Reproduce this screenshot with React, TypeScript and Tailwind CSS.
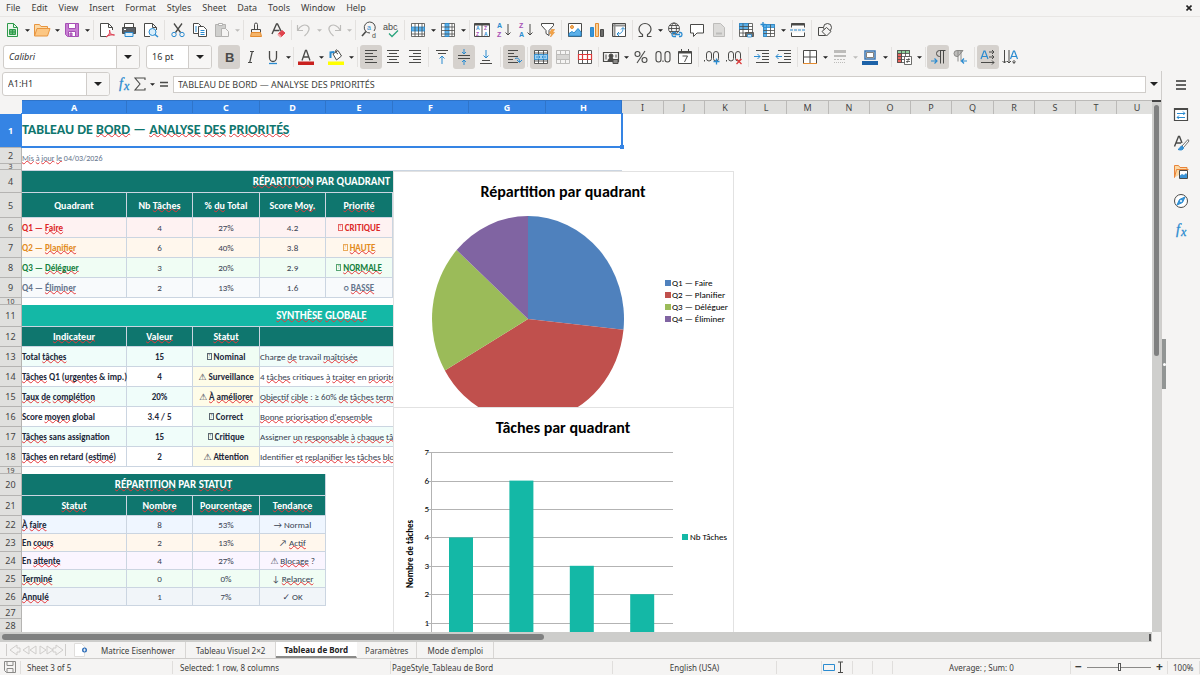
import React from 'react'

const K = '#4a4a48'
const B = '#2a8bd0'

const icons: Record<string, React.ReactNode> = {
    new: (
        <g fill="none" stroke="#2f9a4b">
            <path d="M3.5 1.5h6l4 4v9h-10z" fill="#eaf7ec" />
            <path d="M9.5 1.5v4h4" />
            <path d="M5.5 7.5h6v5h-6zM5.5 10h6M8.5 7.5v5" fill="#6cc07f" />
        </g>
    ),
    open: (
        <g stroke="#e8953f" strokeLinejoin="round">
            <path d="M.5 14V2.500h5l1.500 2h6.500v3" fill="#fbd9a6" />
            <path d="M.5 14L3 6.500h13L13.500 14z" fill="#fcc784" />
        </g>
    ),
    save: (
        <g stroke="#a64fb5" fill="#c87fd3">
            <path d="M1.500 1.500h13v13h-11l-2-2z" />
            <path d="M4.500 1.500h7v5h-7z" fill="#fff" />
            <path d="M4.500 9.500h7v5h-7z" fill="#fff" />
            <path d="M6 11h2v3H6z" />
        </g>
    ),
    pdf: (
        <g fill="none" stroke={K}>
            <path d="M13.500 8V5.500l-4-4h-8v13H8" fill="#fff" />
            <path d="M9.500 1.500v4h4" />
            <path d="M7 15c3-2 4.500-5 3.500-7 0 4 3 5 5 5-3-.5-6 0-8.500 2z" stroke="#dc3a4e" fill="#f0a0aa" />
        </g>
    ),
    print: (
        <g stroke={K}>
            <path d="M3.500 1.500h9v4h-9z" fill="#fff" />
            <path d="M1.500 5.500h13v6h-13z" fill="#5b6066" />
            <path d="M4 10.500h8v4H4z" fill="#dff0fb" stroke={B} />
            <path d="M3 7.500h2" stroke="#fff" />
        </g>
    ),
    preview: (
        <g fill="none" stroke={K}>
            <path d="M7 14.500H1.500v-13h8l4 4V8M9.500 1.500v4h4" fill="#fff" />
            <circle cx="9.500" cy="10" r="3.500" stroke={B} fill="#d9eefb" />
            <path d="M12 12.500l3 2.500" stroke={B} strokeWidth="1.500" />
        </g>
    ),
    cut: (
        <g fill="none" stroke={K}>
            <path d="M4 1.500l6.500 9M12 1.500l-6.500 9" strokeWidth="1.300" />
            <circle cx="4" cy="12.500" r="2.200" stroke={B} />
            <circle cx="12" cy="12.500" r="2.200" stroke={B} />
        </g>
    ),
    copy: (
        <g fill="#fff" stroke={K}>
            <path d="M1.500 1.500h5l3 3v7h-8z" />
            <path d="M6.500 4.500h5l3 3v7h-8z" />
            <path d="M8.500 8.500h4M8.500 10.500h4M8.500 12.500h4M3 5h2M3 7h2M3 9h2" stroke={B} />
        </g>
    ),
    paste: (
        <g fill="#cfcfcd" stroke="#b3b2b0">
            <path d="M1.500 2.500h10v12h-10z" />
            <path d="M4.500 1.500h4v2h-4z" fill="#fff" />
            <path d="M7.500 6.500h4l3 3v5h-7z" fill="#f5f4f3" />
        </g>
    ),
    clone: (
        <g fill="none" stroke={K}>
            <path d="M6.500 7.500v-5a1.500 1.500 0 013 0v5" />
            <path d="M3.500 7.500h9v3h-9z" />
            <path d="M3.500 10.500l-1 4h11l-1-4z" fill="#f5b469" stroke="#e48b2f" />
        </g>
    ),
    clear: (
        <g fill="none" stroke={K}>
            <path d="M2 12L6.500 2h1L11 9M3.500 8.500h6" strokeWidth="1.400" />
            <path d="M8 12l4-3.500 3 2.500-4 4z" fill="#e0444e" stroke="#e0444e" />
            <path d="M8 12l3 3" stroke="#f3a3a8" strokeWidth="2" />
        </g>
    ),
    undo: <path d="M1.500 3v5.500H7M2 8c2-4 6-6 9-4.500 3.500 2 2.500 6-2.500 10.500" fill="none" stroke="#bdbcba" strokeWidth="1.200" />,
    redo: <path d="M14.500 3v5.500H9M14 8c-2-4-6-6-9-4.500C1.500 5.500 2.500 9.500 7.500 14" fill="none" stroke="#bdbcba" strokeWidth="1.200" />,
    find: (
        <g fill="none" stroke={K}>
            <path d="M13 9a5.500 5.500 0 10-4 2" />
            <path d="M5 9.500L1 14" strokeWidth="1.600" />
            <text x="6" y="8" fontSize="7" fill={B} stroke="none">a</text>
            <text x="11" y="16" fontSize="7" fill={K} stroke="none">d</text>
        </g>
    ),
    spell: (
        <g>
            <text x="0" y="8" fontSize="9" fill={K}>abc</text>
            <path d="M6 11.500l3 3 6-6" fill="none" stroke="#2ba47d" strokeWidth="1.300" />
        </g>
    ),
    row: (
        <g fill="none" stroke={K} strokeWidth=".8">
            <path d="M1.500 1.500h13v13h-13z" fill="#fff" />
            <path d="M1.500 5h13v4h-13z" fill="#5cb0e8" stroke={B} />
            <path d="M1.500 12h13M5 1.500v13M8.500 1.500v13M12 1.500v13" />
        </g>
    ),
    col: (
        <g fill="none" stroke={K} strokeWidth=".8">
            <path d="M1.500 1.500h13v13h-13z" fill="#fff" />
            <path d="M5 1.500h4v13H5z" fill="#5cb0e8" stroke={B} />
            <path d="M12 1.500v13M1.500 5h13M1.500 8.500h13M1.500 12h13" />
        </g>
    ),
    sort: (
        <g fontSize="5" fontWeight="bold">
            <path d="M.500 1.500h15v13H.500zM8 2v12" fill="#fff" stroke={K} />
            <path d="M.500 2.500h15" stroke={K} strokeWidth="2" />
            <text x="2" y="8" fill={B}>A</text>
            <text x="2" y="14" fill="#a64fb5">Z</text>
            <text x="10" y="8" fill="#a64fb5">Z</text>
            <text x="10" y="14" fill={B}>A</text>
        </g>
    ),
    az: (
        <g fontSize="7" fontWeight="bold">
            <text x="1" y="6" fill={B}>A</text>
            <text x="1" y="15" fill="#a64fb5">Z</text>
            <path d="M12 2v11M9.500 10.500L12 13l2.500-2.500" fill="none" stroke={K} />
        </g>
    ),
    za: (
        <g fontSize="7" fontWeight="bold">
            <text x="1" y="6" fill="#a64fb5">Z</text>
            <text x="1" y="15" fill={B}>A</text>
            <path d="M12 2v11M9.500 10.500L12 13l2.500-2.500" fill="none" stroke={K} />
        </g>
    ),
    filter: (
        <g fill="none" stroke={K}>
            <path d="M1.500 1.500h12v2l-4.500 5v5l-3-2V8.500l-4.500-5z" fill="#fff" />
            <path d="M11.500 7.500h3l-2 3h2l-4 4.500 1-3.500h-2z" fill="#f5a545" stroke="#e48b2f" strokeWidth=".6" />
        </g>
    ),
    image: (
        <g stroke={K}>
            <path d="M1.500 1.500h13v13h-13z" fill="#fff" />
            <circle cx="5" cy="5" r="1.500" fill="#f5b469" stroke="#e48b2f" />
            <path d="M2 14v-2.500l3-2 2 1.500 4-4.500 3 3.500v4z" fill="#5cb0e8" stroke={B} />
        </g>
    ),
    chart: (
        <g>
            <path d="M1.500 5.500h3v9h-3z" fill="#3a93d6" stroke={B} />
            <path d="M6.500 1.500h3v13h-3z" fill="#f9cf96" stroke="#e48b2f" />
            <path d="M11.500 7.500h3v7h-3z" fill="#6b6b69" stroke={K} />
        </g>
    ),
    pivot: (
        <g fill="none" stroke={K}>
            <path d="M1.500 1.500h13v13h-13z" fill="#fff" />
            <path d="M1.500 3.500h13M3.500 1.500v13" strokeWidth="2" strokeOpacity=".6" />
            <path d="M12 6c0 4-2 6-6 6M10 7.500L12 5.500l2 2M8 10l-2 2 2 2" stroke={B} />
        </g>
    ),
    omega: <path d="M1.500 14.500h4v-2C3 11 2 9 2 7a6 5.500 0 0112 0c0 2-1 4-3.500 5.500v2h4" fill="none" stroke={K} strokeWidth="1.200" />,
    link: (
        <g fill="none" stroke={K} strokeWidth=".9">
            <circle cx="7" cy="6.500" r="5.500" />
            <ellipse cx="7" cy="6.500" rx="2.500" ry="5.500" />
            <path d="M1.500 6.500h11M2.500 3.500h9M2.500 9.500h9" />
            <path d="M9 10.500H6.500a1.500 2 0 000 4H9M12 10.500h1.500a1.500 2 0 010 4H12M8 12.500h5" stroke={B} strokeWidth="1.300" />
        </g>
    ),
    comment: <path d="M1.500 2.500h13v8.500H8l-3.500 3.500V11h-3z" fill="#fff" stroke={K} />,
    page: (
        <g fill="#dcdbd9" stroke="#bdbcba">
            <path d="M2.500 1.500h7l4 4v9h-11z" />
            <path d="M5 11.500h6" strokeWidth="2" />
        </g>
    ),
    printarea: (
        <g stroke={K} fill="none" strokeWidth=".8">
            <path d="M1.500 1.500h13v13h-13z" fill="#fff" />
            <path d="M1.500 1.500h9v6h-9z" fill="#5cb0e8" stroke={B} />
            <path d="M1.500 4.500h13M1.500 7.500h13M1.500 11h13M5 1.500v13M10.500 1.500v13" />
            <path d="M7.500 10.500h8v4h-8z" fill="#6b6b69" />
            <path d="M9.500 12.500h4v2.500h-4z" fill="#dff0fb" stroke={B} />
        </g>
    ),
    freeze: (
        <g stroke={K} fill="none" strokeWidth=".8">
            <path d="M3.500 2.500h11v12h-11z" fill="#fff" />
            <path d="M3.500 2.500h11v3h-11zM3.500 2.500h3v12h-3z" fill="#5cb0e8" stroke={B} />
            <path d="M3.500 8.500h11M3.500 11.500h11M10.500 2.500v12" />
            <path d="M.500 2.500h5M3 0v5" stroke={B} strokeWidth="1.300" />
        </g>
    ),
    split: (
        <g fill="none" stroke={K}>
            <path d="M1.500 5.500v-4h13v4M1.500 10.500v4h13v-4" fill="#fff" />
            <path d="M1.500 2.500h13" strokeWidth="2" />
            <path d="M0 8h16" stroke={B} strokeDasharray="3 1" />
        </g>
    ),
    shapes: (
        <g fill="#f5f4f3" stroke={K}>
            <path d="M1.500 5.500h7v8h-7z" />
            <circle cx="10.500" cy="5.500" r="4" />
            <path d="M9.500 5.500l4.500 4-4.500 4.500L5 9.500z" />
        </g>
    ),
    bold: <text x="4" y="13" fontSize="13" fontWeight="bold" fill={K}>B</text>,
    italic: <path d="M7 2.500h4M5 13.500h4M9.300 2.500L6.700 13.500" fill="none" stroke={K} strokeWidth="1.200" />,
    under: (
        <g fill="none">
            <path d="M4.500 2v6.500a3.500 4 0 007 0V2" stroke={K} strokeWidth="1.300" />
            <path d="M4 14.500h8" stroke={B} strokeWidth="1.300" />
        </g>
    ),
    color: (
        <g>
            <path d="M4 11.500L7.500 1.500h1L12 11.500M5.200 8h5.600" fill="none" stroke={K} strokeWidth="1.300" />
            <path d="M0 12.500h16v3.500H0z" fill="#c9211e" />
        </g>
    ),
    fill: (
        <g>
            <path d="M5 5l5-3.500 3.500 5.500-5 4z" fill="#fff" stroke={K} />
            <path d="M9 1c-2-1-2 3 1 4" fill="none" stroke={K} />
            <path d="M2.500 9V3.500L6.500 3" stroke={B} strokeWidth="2" fill="none" />
            <path d="M0 12.500h16v3.500H0z" fill="#ffff00" />
        </g>
    ),
    left: <path d="M2 1.500h12M2 4.500h8M2 7.500h12M2 10.500h8M2 13.500h12" stroke={K} />,
    center: <path d="M2 1.500h12M4 4.500h8M2 7.500h12M4 10.500h8M2 13.500h12" stroke={K} />,
    right: <path d="M2 1.500h12M6 4.500h8M2 7.500h12M6 10.500h8M2 13.500h12" stroke={K} />,
    top: (
        <g fill="none">
            <path d="M2 1.500h12M4 4.500h8" stroke={K} />
            <path d="M8 15V7M5.500 9.500L8 7l2.500 2.500" stroke={B} />
        </g>
    ),
    middle: (
        <g fill="none">
            <path d="M2 6.500h12M2 9.500h12" stroke={K} />
            <path d="M8 0v5M6 3l2 2 2-2M8 16v-5M6 13l2-2 2 2" stroke={B} />
        </g>
    ),
    bottom: (
        <g fill="none">
            <path d="M2 14.500h12M4 11.500h8" stroke={K} />
            <path d="M8 1v8M5.500 6.500L8 9l2.500-2.500" stroke={B} />
        </g>
    ),
    wrap: (
        <g fill="none">
            <path d="M2 1.500h10M2 4.500h6M2 7.500h10M2 10.500h5M2 13.500h10" stroke={K} />
            <path d="M9 9.500c3-1 4.500 0 4.500 3.500M11 11l2.500 2.500L16 11" stroke={B} />
        </g>
    ),
    merge: (
        <g fill="none" stroke={K} strokeWidth=".9">
            <path d="M1.500 1.500h13v13h-13z" fill="#fff" />
            <path d="M1.500 5.500h13v5h-13z" fill="#9ed1f3" stroke={B} />
            <path d="M1.500 4h13M1.500 12h13M5.500 1.500v4M10.500 1.500v4M5.500 10.500v4M10.500 10.500v4" />
            <path d="M3 8h4M9 8h4M5.500 6.500L7 8 5.500 9.500M10.500 6.500L9 8l1.500 1.500" stroke={B} />
        </g>
    ),
    mergeoff: (
        <g fill="none" stroke="#bdbcba">
            <path d="M1.500 1.500h13v13h-13zM1.500 5.500h13M1.500 10.500h13M5.500 1.500v4M10.500 1.500v4M5.500 10.500v4M10.500 10.500v4" />
            <path d="M2 8h12" strokeWidth="4" stroke="#d7d6d4" />
        </g>
    ),
    unmerge: (
        <g fill="none" stroke={K} strokeWidth=".9">
            <path d="M1.500 1.500h13v13h-13z" fill="#fff" />
            <path d="M1.500 5.500h13M1.500 10.500h13M5.500 1.500v13M10.500 1.500v13" />
            <path d="M1.500 5.500h13v5h-13zM5.500 5.500v5M10.500 5.500v5" stroke="#dc3a3a" strokeWidth="1.200" />
        </g>
    ),
    money: (
        <g fill="none" stroke={K}>
            <path d="M.500 3.500h15v9H.500z" strokeWidth="1.200" />
            <circle cx="8" cy="7" r="2" fill={K} />
            <path d="M3 5.500v5M13 5.500v3" />
            <path d="M5 12c0-4 6-4 6 0z" fill={K} />
            <path d="M10 14.500v-4h5v4z" fill="#8b8a88" />
        </g>
    ),
    percent: (
        <g fill="none" stroke={K} strokeWidth="1.100">
            <circle cx="4.500" cy="5" r="2.500" />
            <circle cx="11.500" cy="11" r="2.500" />
            <path d="M12 2L4 14" />
        </g>
    ),
    number: (
        <g fill="none" stroke={K} strokeWidth="1.100">
            <rect x="1" y="2.500" width="5" height="10.500" rx="2.500" />
            <rect x="10" y="2.500" width="5" height="10.500" rx="2.500" />
            <path d="M8 11.500v1.500" />
        </g>
    ),
    date: (
        <g fill="none" stroke={K}>
            <path d="M1.500 2.500h13v12h-13z" fill="#fff" />
            <path d="M1.500 3.500h13" strokeWidth="2" />
            <path d="M4.500 0v2M11.500 0v2M5.500 7h5l-3 6" />
        </g>
    ),
    adddec: (
        <g fill="none" stroke={K}>
            <rect x="2.500" y="2.500" width="5" height="9.500" rx="2.500" />
            <rect x="9.500" y="2.500" width="5" height="9.500" rx="2.500" />
            <path d="M.500 11v1.500" />
            <path d="M9.500 12.500h6M12.500 9.500v6" stroke={B} strokeWidth="1.300" />
        </g>
    ),
    deldec: (
        <g fill="none" stroke={K}>
            <rect x="2.500" y="2.500" width="5" height="9.500" rx="2.500" />
            <rect x="9.500" y="2.500" width="5" height="9.500" rx="2.500" />
            <path d="M.500 11v1.500" />
            <path d="M10.500 10l5 5M15.500 10l-5 5" stroke="#dc3a3a" strokeWidth="1.300" />
        </g>
    ),
    indent: (
        <g fill="none" stroke={K}>
            <path d="M2 1.500h13M8 4.500h7M8 7.500h7M8 10.500h7M2 13.500h13" />
            <path d="M0 7.500h6M3.500 5L6 7.500 3.500 10" stroke={B} />
        </g>
    ),
    outdent: (
        <g fill="none" stroke={K}>
            <path d="M2 1.500h13M8 4.500h7M8 7.500h7M8 10.500h7M2 13.500h13" />
            <path d="M0 7.500h6M2.500 5L0 7.500 2.500 10" stroke={B} />
        </g>
    ),
    border: (
        <g fill="none" stroke={K}>
            <path d="M1.500 14.500v-13h13v13M8 1.500v13M1.500 8h13" fill="#fff" />
            <path d="M1 14.500h14" stroke="#e48b2f" />
        </g>
    ),
    line: (
        <g stroke="#bdbcba">
            <path d="M2 2.500h12" strokeWidth="3" />
            <path d="M2 7h12" strokeWidth="2" />
            <path d="M2 10.500h12" strokeDasharray="2 1" />
            <path d="M2 13.500h12" strokeDasharray="1 1" />
        </g>
    ),
    bcolor: (
        <g>
            <path d="M3 2h10v8H3z" fill="#fff" stroke="#3a76b4" strokeWidth="1.500" />
            <path d="M4.500 3.500h7v5h-7z" fill="none" stroke={K} strokeWidth=".7" />
            <path d="M0 12h16v4H0z" fill="#1d62a8" />
        </g>
    ),
    cond: (
        <g fill="none" stroke={K} strokeWidth=".8">
            <path d="M1.500 1.500h12v12h-12z" fill="#fff" />
            <path d="M1.500 1.500h12v3h-12z" fill="#8fd19e" />
            <path d="M1.500 4.500h4v9h-4z" fill="#e9655f" />
            <path d="M1.500 7.500h12M1.500 10.500h12M5.500 1.500v12M9.500 1.500v12" />
            <path d="M8.500 7.500h7v8h-7zM10 10.500h4M10 12.500h4M13 9l-2 5" fill="#fff" />
        </g>
    ),
    ltr: (
        <g fill="none" stroke={K}>
            <path d="M15.500 1.500h-6a3 3 0 000 6h1M10.500 1.500v13M13.500 1.500v13" />
            <path d="M1 12h6M4.500 9.500L7 12l-2.500 2.500" stroke={B} strokeWidth="1.200" />
        </g>
    ),
    rtl: (
        <g fill="none" stroke="#8b8a88">
            <path d="M11 1.500H5a3 3 0 000 6h1z" fill="#bdbcba" />
            <path d="M11 1.500H5M6 1.500v11M9 1.500v11" />
            <path d="M15 12H9.500M12 9.500L9.500 12l2.500 2.500" stroke={B} strokeWidth="1.200" />
        </g>
    ),
    horiz: (
        <g fill="none" stroke={K}>
            <path d="M1 10L4 2h1l3 8M2 7.500h5" stroke={B} strokeWidth="1.200" />
            <path d="M9 3h5M12 1l2 2-2 2M9 8h5M12 6l2 2-2 2M1 13.500h13M12 11.500l2 2-2 2" />
        </g>
    ),
    vert: (
        <g fill="none" stroke={K}>
            <path d="M8.500 10l3-8h1l3 8M9.500 7.500h5" stroke={B} strokeWidth="1.200" />
            <path d="M2.500 1v13M.500 12l2 2 2-2M7 1v13M5 12l2 2 2-2M12 11v3M10.500 12.500l1.500 2 1.500-2" />
        </g>
    ),
    menu: <path d="M3 4h10M3 8h10M3 12h10" stroke="#333" strokeWidth="1.500" />,
    props: (
        <g fill="none" stroke={K}>
            <path d="M1.500 2.500h13v12h-13z" fill="#fff" strokeWidth="1.200" />
            <path d="M1.500 3h13" strokeWidth="2" />
            <path d="M4 7.500h8M4 11.500h8M10 5.500l2 2-2 1M6 9.500l-2 2 2 1" stroke={B} />
        </g>
    ),
    styles: (
        <g fill="none" stroke={K}>
            <path d="M1.500 11.500L5.500 1.500h1L9 8M3 8h5" strokeWidth="1.400" />
            <path d="M15 4.500L9 11l1.500 1.500L16 6z" fill="#fff" strokeWidth=".8" />
            <path d="M9 11c-2 0-2 3-4 3.500 3 1 5.500.5 5.500-2z" fill="#3a93d6" stroke={B} />
        </g>
    ),
    gallery: (
        <g>
            <path d="M1.500 13.500v-12h4l1.500 2h7v3" fill="#fbd9a6" stroke="#e8843a" />
            <path d="M1.500 13.500l2-8h12" fill="none" stroke="#e8843a" />
            <path d="M6.500 6.500h8v8h-8z" fill="#fff" stroke={K} />
            <path d="M7 14v-2.500l2-1.500 2 1 2-2 1 1.500V14z" fill="#3a93d6" />
        </g>
    ),
    nav: (
        <g>
            <circle cx="8" cy="8" r="6.500" fill="#fff" stroke={K} />
            <path d="M12 4L9.500 9.500 4 12l2.500-5.500z" fill="#3a93d6" stroke={B} />
            <circle cx="8" cy="8" r="1" fill="#fff" />
        </g>
    ),
    fx: (
        <g fontFamily="Liberation Serif" fontStyle="italic" fill={B} stroke={B} strokeWidth=".3">
            <text x="3" y="12" fontSize="14">f</text>
            <text x="8" y="14" fontSize="12">x</text>
        </g>
    ),
    sigma: <path d="M13 4V2H3l5 6-5 6h10v-2" fill="none" stroke={K} strokeWidth="1.100" />,
    equal: <path d="M4 6.500h8M4 10h8" stroke={K} strokeWidth="1.500" />,
}

const Icon = ({ name }: { name: string }) => (
    <svg viewBox="0 0 16 16" className="h-4 w-4 shrink-0 overflow-visible font-['Liberation_Sans',sans-serif]">{icons[name]}</svg>
)

const Caret = ({ off, big }: { off?: boolean; big?: boolean }) => (
    <svg viewBox="0 0 8 4" className={big ? 'h-1 w-2' : 'h-[3px] w-[5px]'}>
        <path d="M0 0h8L4 4z" fill={off ? '#bdbcba' : '#222'} />
    </svg>
)

// "name" plain, "name*" pressed, "name+" with drop-down, "name-" with a disabled one, a number is a separator
const Tools = ({ items }: { items: (string | number)[] }) => (
    <>
        {items.map((item, i) => {
            if (typeof item === 'number') {
                const w = item === 3 ? 'w-[3px]' : item === 4 ? 'w-[4px]' : item === 5 ? 'w-[5px]' : 'w-[6px]'
                return <span key={i} className={`${w} flex h-5 shrink-0 justify-center`}><span className="w-px bg-[#e3e1df]" /></span>
            }
            const name = item.replace(/[*+-]$/, '')
            const end = item.slice(-1)
            return (
                <React.Fragment key={i}>
                    <button aria-label={name} className={`flex h-6 w-[22px] shrink-0 items-center justify-center rounded-[3px] ${end === '*' ? 'bg-[#d5d1cd]' : ''}`}>
                        <Icon name={name} />
                    </button>
                    {(end === '+' || end === '-') && (
                        <button aria-label={`${name} options`} className="flex h-6 w-2 shrink-0 items-center justify-center">
                            <Caret off={end === '-'} />
                        </button>
                    )}
                </React.Fragment>
            )
        })}
    </>
)

const Combo = ({ label, value, box, btn, italic }: { label: string; value: string; box: string; btn: string; italic?: boolean }) => (
    <div className={`flex h-6 shrink-0 overflow-hidden rounded-[3px] border border-[#d0cdca] bg-white ${box}`}>
        <input aria-label={label} defaultValue={value} className={`min-w-0 flex-1 px-[5px] text-[#333] ${italic ? 'italic' : ''}`} />
        <button aria-label={`${label} list`} className={`flex items-center justify-center border-l border-[#d0cdca] bg-[#f7f6f5] ${btn}`}><Caret big /></button>
    </div>
)

const menus = ['File', 'Edit', 'View', 'Insert', 'Format', 'Styles', 'Sheet', 'Data', 'Tools', 'Window', 'Help']

const tools1 = [
    'new+', 'open+', 'save+', 5, 'pdf', 'print', 'preview', 5, 'cut', 'copy', 'paste-', 4, 'clone', 'clear', 4, 'undo-', 'redo-', 5,
    'find', 'spell', 5, 'row+', 'col+', 4, 'sort', 'az', 'za', 'filter', 5, 'image', 'chart', 'pivot', 4, 'omega+', 'link', 'comment', 'page', 5,
    'printarea', 'freeze+', 'split', 5, 'shapes',
]

const tools2 = [
    'bold*', 'italic', 'under+', 3, 'color+', 'fill+', 5, 'left*', 'center', 'right', 5, 'top', 'middle*', 'bottom', 6, 'wrap*', 5,
    'merge*', 'mergeoff', 'unmerge', 4, 'money+', 'percent', 'number', 'date', 5, 'adddec', 'deldec', 6, 'indent', 'outdent', 4,
    'border+', 'line-', 'bcolor+', 4, 'cond+', 4, 'ltr*', 'rtl', 6, 'horiz*', 'vert',
]

const columns = [
    ['A', 'w-[105px]'], ['B', 'w-[66px]'], ['C', 'w-[67px]'], ['D', 'w-[66px]'], ['E', 'w-[67px]'], ['F', 'w-[76px]'], ['G', 'w-[77px]'], ['H', 'w-[76px]'],
    ['I', 'w-[42px]'], ['J', 'w-[41px]'], ['K', 'w-[41px]'], ['L', 'w-[41px]'], ['M', 'w-[42px]'], ['N', 'w-[41px]'], ['O', 'w-[41px]'], ['P', 'w-[41px]'],
    ['Q', 'w-[42px]'], ['R', 'w-[41px]'], ['S', 'w-[41px]'], ['T', 'w-[41px]'], ['U', 'w-[41px]'],
]

type Cell = { t: string; c: string; span?: number }
type Row = { h: string; cells?: Cell[]; thin?: boolean }

const line = 'border-b border-r border-[#cbd5e1]'
const dark = `${line} bg-[#0f766e] text-white font-bold text-center`

const head = (names: string[]): Cell[] => names.map((t) => ({ t, c: `${dark} text-[10px]` }))

const quadrant = (bg: string, color: string, v: string[]): Cell[] => v.map((t, i) => ({
    t,
    c: `${line} ${bg} ${i === 0 || i === 4 ? `${color} font-bold` : 'text-[#374151]'} ${i === 0 ? '' : 'text-center'}`,
}))

const summary = (bg: string, state: string, v: string[]): Cell[] => [
    { t: v[0], c: `${line} ${bg} font-bold text-[#1e293b]` },
    { t: v[1], c: `${line} ${bg} font-bold text-[#1e293b] text-center` },
    { t: v[2], c: `${line} ${state} font-bold text-[#1e293b] text-center` },
    { t: v[3], c: `${line} ${bg} text-[#374151]`, span: 5 },
]

const status = (bg: string, v: string[]): Cell[] => v.map((t, i) => ({
    t,
    c: `${line} ${bg} ${i === 0 ? 'font-bold text-[#1e293b]' : 'text-[#374151] text-center'}`,
}))

const mint = 'bg-[#f0fdfa]'
const green = 'bg-[#f0fdf4]'
const yellow = 'bg-[#fefce8]'

// [word] is flagged by the spell checker, □ is a glyph the font does not have
const rows: Row[] = [
    { h: 'h-[34px]', cells: [{ t: 'TABLEAU DE [BORD] — [ANALYSE] [DES] [PRIORITÉS]', c: 'pb-[3px] text-[14px] leading-[18px] font-bold text-[#0f766e]', span: 8 }] },
    { h: 'h-[16px]', cells: [{ t: '[Mis] [à] [jour] [le] 04/03/2026', c: 'text-[8px] text-[#64748b] align-bottom', span: 8 }] },
    { h: 'h-[6px]', thin: true },
    { h: 'h-[23px]', cells: [{ t: '[RÉPARTITION] PAR QUADRANT', c: `${dark} border-t text-[11px]`, span: 8 }] },
    { h: 'h-[25px]', cells: head(['Quadrant', 'Nb [Tâches]', '% [du] Total', 'Score [Moy.]', '[Priorité]']) },
    { h: 'h-[20px]', cells: quadrant('bg-[#fef2f2]', 'text-[#dc2626]', ['Q1 — [Faire]', '4', '27%', '4.2', '□ CRITIQUE']) },
    { h: 'h-[20px]', cells: quadrant('bg-[#fff7ed]', 'text-[#e28a1c]', ['Q2 — [Planifier]', '6', '40%', '3.8', '□ [HAUTE]']) },
    { h: 'h-[20px]', cells: quadrant(green, 'text-[#15803d]', ['Q3 — [Déléguer]', '3', '20%', '2.9', '□ [NORMALE]']) },
    { h: 'h-[20px]', cells: quadrant('bg-[#f8fafc]', 'text-[#64748b]', ['Q4 — [Éliminer]', '2', '13%', '1.6', '○ [BASSE]']) },
    { h: 'h-[7px]', thin: true },
    { h: 'h-[22px]', cells: [{ t: '[SYNTHÈSE] [GLOBALE]', c: `${line} bg-[#14b8a6] text-center text-[11px] font-bold text-white`, span: 8 }] },
    { h: 'h-[20px]', cells: [...head(['[Indicateur]', '[Valeur]', '[Statut]']), { t: '', c: dark, span: 5 }] },
    { h: 'h-[20px]', cells: summary(mint, green, ['Total [tâches]', '15', '□ Nominal', 'Charge [de] travail [maîtrisée]']) },
    { h: 'h-[20px]', cells: summary('bg-white', yellow, ['[Tâches] Q1 ([urgentes] & imp.)', '4', '⚠ Surveillance', '4 [tâches] critiques [à] [traiter] en [priorité]']) },
    { h: 'h-[20px]', cells: summary(mint, yellow, ['[Taux] [de] [complétion]', '20%', '⚠ [À] [améliorer]', '[Objectif] [cible] : ≥ 60% [de] [tâches] [terminées]']) },
    { h: 'h-[20px]', cells: summary('bg-white', green, ['Score [moyen] global', '3.4 / 5', '□ Correct', "[Bonne] [priorisation] [d'ensemble]"]) },
    { h: 'h-[20px]', cells: summary(mint, green, ['[Tâches] sans assignation', '15', '□ Critique', 'Assigner [un] [responsable] [à] [chaque] [tâche]']) },
    { h: 'h-[20px]', cells: summary('bg-white', yellow, ['[Tâches] en retard ([estimé])', '2', '⚠ Attention', 'Identifier [et] [replanifier] [les] [tâches] [bloquées]']) },
    { h: 'h-[7px]', thin: true },
    { h: 'h-[22px]', cells: [{ t: '[RÉPARTITION] PAR [STATUT]', c: `${dark} text-[11px]`, span: 4 }] },
    { h: 'h-[20px]', cells: head(['[Statut]', '[Nombre]', '[Pourcentage]', '[Tendance]']) },
    { h: 'h-[18px]', cells: status('bg-[#eff6ff]', ['[À] [faire]', '8', '53%', '→ Normal']) },
    { h: 'h-[18px]', cells: status('bg-[#fff7ed]', ['En [cours]', '2', '13%', '↗ [Actif]']) },
    { h: 'h-[18px]', cells: status('bg-[#faf5ff]', ['En [attente]', '4', '27%', '⚠ [Blocage] ?']) },
    { h: 'h-[18px]', cells: status(green, ['[Terminé]', '0', '0%', '↓ [Relancer]']) },
    { h: 'h-[18px]', cells: status('bg-[#f1f5f9]', ['[Annulé]', '1', '7%', '✓ OK']) },
    { h: 'h-[13px]' },
    { h: 'h-[14px]' },
]

const CellText = ({ text }: { text: string }) => (
    <>
        {text.split(/(\[[^\]]+\]|□)/).map((part, i) => {
            if (part === '□') {
                return <span key={i} className="inline-block h-[7px] w-[5px] overflow-hidden border border-current text-center text-[5px] font-normal leading-[5px] opacity-70">?</span>
            }
            if (part[0] === '[') {
                return <span key={i} className="underline decoration-[#e5383b] decoration-wavy decoration-1 underline-offset-[-1px] [text-decoration-skip-ink:none]">{part.slice(1, -1)}</span>
            }
            return part
        })}
    </>
)

const Grid = () => (
    <table className="w-[1158px] table-fixed border-separate border-spacing-0 font-['Carlito','Lato','DejaVu_Sans',sans-serif] text-[9px] leading-[11px]">
        <thead>
            <tr className="h-[14px] font-['Noto_Sans',sans-serif] leading-[11px]">
                <th className="w-[22px] bg-[#f5f4f3] p-0" />
                {columns.map(([name, w], i) => (
                    <th
                        key={name}
                        scope="col"
                        className={`${w} border-r border-t p-0 ${i < 8 ? 'border-[#2f74c9] bg-[#3584e4] font-bold text-white' : 'border-[#bbbab8] bg-[#e0e0de] font-normal text-[#444]'}`}
                    >
                        {name}
                    </th>
                ))}
            </tr>
        </thead>
        <tbody>
            {rows.map((row, i) => (
                <tr key={i} className={row.h}>
                    <th
                        scope="row"
                        className={`border-b border-r border-[#b5b4b2] p-0 text-center font-['Noto_Sans',sans-serif] ${i === 0 ? 'bg-[#3584e4] font-bold text-white' : 'bg-[#e0e0de] font-normal text-[#444]'} ${row.thin ? 'text-[7px] leading-[5px]' : 'leading-[11px]'}`}
                    >
                        {i + 1}
                    </th>
                    {row.cells?.map((cell, j) => (
                        <td key={j} colSpan={cell.span} className={`whitespace-nowrap p-0 ${cell.c}`}>
                            <CellText text={cell.t} />
                        </td>
                    ))}
                </tr>
            ))}
        </tbody>
    </table>
)

const slices = [
    { name: 'Q1 — Faire', value: 4, color: '#4f81bd' },
    { name: 'Q2 — Planifier', value: 6, color: '#c0504d' },
    { name: 'Q3 — Déléguer', value: 3, color: '#9bbb59' },
    { name: 'Q4 — Éliminer', value: 2, color: '#8064a2' },
]

const pieX = (v: number) => 135 + 96 * Math.sin((v / 15) * Math.PI * 2)
const pieY = (v: number) => 148 - 103 * Math.cos((v / 15) * Math.PI * 2)

const PieChart = () => {
    let from = 0
    return (
        <svg width="341" height="237" className="block bg-white font-['Carlito','Lato',sans-serif]">
            <rect x=".5" y=".5" width="340" height="240" fill="none" stroke="#e2e2e2" />
            <text x="170" y="26" fontSize="16" fontWeight="bold" textAnchor="middle">Répartition par quadrant</text>
            {slices.map((s, i) => {
                const a = from
                from += s.value
                return (
                    <g key={s.name}>
                        <path d={`M135 148L${pieX(a)} ${pieY(a)}A96 103 0 0 1 ${pieX(from)} ${pieY(from)}z`} fill={s.color} />
                        <rect x="272" y={109 + i * 12} width="6" height="6" fill={s.color} />
                        <text x="279" y={115 + i * 12} fontSize="9">{s.name}</text>
                    </g>
                )
            })}
        </svg>
    )
}

const BarChart = () => (
    <svg width="341" height="300" className="block bg-white font-['Carlito','Lato',sans-serif]">
        <rect x=".5" y=".5" width="340" height="320" fill="none" stroke="#e2e2e2" />
        <text x="170" y="26" fontSize="16" fontWeight="bold" textAnchor="middle">Tâches par quadrant</text>
        {[7, 6, 5, 4, 3, 2, 1].map((n) => (
            <g key={n}>
                <path d={`M35 ${Math.round(244 - n * 28.4) + 0.5}h245`} stroke="#b3b3b3" />
                <text x="36" y={247 - n * 28.4} fontSize="9" textAnchor="end">{n}</text>
            </g>
        ))}
        <path d="M38.500 45v255" stroke="#b3b3b3" />
        {slices.map((s, i) => (
            <rect key={s.name} x={56 + i * 60.4} y={244 - s.value * 28.4} width="24" height={s.value * 28.4} fill="#14b8a6" />
        ))}
        <text transform="translate(20 147) rotate(-90)" fontSize="9" fontWeight="bold" textAnchor="middle">Nombre de tâches</text>
        <rect x="289" y="127" width="6" height="6" fill="#14b8a6" />
        <text x="297" y="133" fontSize="9">Nb Tâches</text>
    </svg>
)

const tabs = ['Matrice Eisenhower', 'Tableau Visuel 2×2', 'Tableau de Bord', 'Paramètres', "Mode d'emploi"]

const tabStyle = (i: number) => {
    if (i === 2) return 'border-b-2 border-b-[#8a8a88] border-r-transparent bg-white px-2 font-bold text-[#222]'
    return i === 3 ? 'border-r-[#d8d6d4] px-2' : 'border-r-[#d8d6d4] px-[10px]'
}

const SheetTabs = () => (
    <div className="flex h-4 shrink-0 items-stretch bg-[#f5f4f3] text-[8px]">
        <svg viewBox="0 0 64 14" className="ml-1 h-[14px] w-16 self-center" fill="none" stroke="#cfcdcb">
            <path d="M2.500 1v12M13 2L6 7l7 5v-3h3V5h-3zM25 3l-6 4 6 4zM32 3l-6 4 6 4zM36 3l6 4-6 4zM43 3l6 4-6 4zM52 2l7 5-7 5V9h-3V5h3zM61.500 1v12" />
        </svg>
        <button aria-label="Add sheet" className="ml-[6px] flex w-[14px] items-center">
            <svg viewBox="0 0 14 14" className="h-[14px] w-[14px]">
                <path d="M.500 .500h7l3 3v10h-10z" fill="#fff" stroke="#e0dedc" />
                <circle cx="10.500" cy="7" r="2.500" fill="#2b6cb8" />
                <path d="M9 7h3M10.500 5.500v3" stroke="#fff" strokeWidth=".8" />
            </svg>
        </button>
        <div role="tablist" className="ml-[3px] flex">
            {tabs.map((t, i) => (
                <button key={t} role="tab" aria-selected={i === 2} className={`border-r leading-[13px] ${tabStyle(i)}`}>
                    {t}
                </button>
            ))}
        </div>
    </div>
)

const StatusBar = () => (
    <footer className="grid h-[17px] shrink-0 grid-cols-[21px_152fr_218fr_222fr_164fr_45px_31px_20px_20px_178fr_97px_32px] items-center border-t border-[#cfcdcb] text-[8px] leading-[14px] [&>*]:h-[13px] [&>*]:border-r [&>*]:border-[#e0dedc]">
        <span className="flex items-center justify-center">
            <svg viewBox="0 0 12 12" className="h-3 w-3" fill="none" stroke="#8b8a88">
                <path d="M.500 .500h11v11h-9l-2-2zM3 .500v4h6v-4M3 11.500v-4h6v4" />
            </svg>
        </span>
        <span className="pl-[6px]">Sheet 3 of 5</span>
        <span className="pl-[7px]">Selected: 1 row, 8 columns</span>
        <span className="pl-px">PageStyle_Tableau de Bord</span>
        <span className="text-center">English (USA)</span>
        <span />
        <span className="flex items-center justify-end pr-[6px]">
            <svg viewBox="0 0 24 12" className="h-3 w-6 overflow-visible" fill="none">
                <path d="M1.500 3.500h11v6h-11z" stroke={B} />
                <path d="M16 1h5M16 11.500h5M18.500 1v10.500" stroke={K} />
            </svg>
        </span>
        <span />
        <span />
        <span className="text-center">Average: ; Sum: 0</span>
        <span className="flex items-center justify-between px-1">
            <button aria-label="Zoom out" className="text-[12px] font-bold leading-[12px]">−</button>
            <input
                type="range"
                aria-label="Zoom"
                className="h-px w-16 appearance-none bg-[#8b8a88] [&::-webkit-slider-thumb]:h-2 [&::-webkit-slider-thumb]:w-[3px] [&::-webkit-slider-thumb]:appearance-none [&::-webkit-slider-thumb]:border [&::-webkit-slider-thumb]:border-[#555] [&::-webkit-slider-thumb]:bg-white"
            />
            <button aria-label="Zoom in" className="text-[12px] font-bold leading-[12px]">+</button>
        </span>
        <span className="border-r-0 pl-[5px]">100%</span>
    </footer>
)

const App = () => {
    return (
        <div className="flex h-screen flex-col overflow-hidden bg-[#f5f4f3] font-['Noto_Sans',sans-serif] text-[9px] text-[#3d3d3b]">
            <header className="flex h-[17px] shrink-0 items-center justify-between border-b border-[#e8e6e4] pl-[6px] pr-[6px]">
                <nav className="flex gap-[11px]">
                    {menus.map((m) => <button key={m}>{m}</button>)}
                </nav>
                <button aria-label="Close" className="flex w-[10px] justify-center">
                    <svg viewBox="0 0 6 6" className="h-[6px] w-[6px]"><path d="M.500 .500l5 5M5.500 .500l-5 5" stroke="#222" strokeWidth="1.600" /></svg>
                </button>
            </header>
            <div className="flex h-[26px] shrink-0 items-center pl-px">
                <Tools items={tools1} />
            </div>
            <div className="flex h-[28px] shrink-0 items-center pl-[3px]">
                <Combo label="Font name" value="Calibri" box="w-[137px] mr-[6px]" btn="w-[23px]" italic />
                <Combo label="Font size" value="16 pt" box="w-[66px] mr-[6px]" btn="w-[23px]" />
                <Tools items={tools2} />
            </div>

            <div className="flex min-h-0 flex-1">
                <main className="flex min-w-0 flex-1 flex-col">
                    <div className="flex h-[29px] shrink-0 items-center pb-[3px] pl-[2px]">
                        <Combo label="Name box" value="A1:H1" box="w-[108px] mr-[6px]" btn="w-[23px]" />
                        <button aria-label="Function wizard" className="flex w-4 justify-center"><Icon name="fx" /></button>
                        <button aria-label="Sum" className="flex w-4 justify-center"><Icon name="sigma" /></button>
                        <button aria-label="Sum options" className="flex w-2 justify-center"><Caret /></button>
                        <button aria-label="Formula" className="mr-px flex w-4 justify-center"><Icon name="equal" /></button>
                        <input
                            aria-label="Input line"
                            defaultValue="TABLEAU DE BORD — ANALYSE DES PRIORITÉS"
                            className="h-[17px] min-w-0 flex-1 border border-[#d0cdca] bg-white px-1"
                        />
                        <button aria-label="Expand" className="flex w-[15px] justify-center"><Caret big /></button>
                    </div>
                    <div className="flex min-h-0 flex-1">
                        <div className="relative min-w-0 flex-1 overflow-hidden bg-white">
                            <Grid />
                            <div className="pointer-events-none absolute left-[21px] top-[13px] h-[35px] w-[602px] border-2 border-l border-t border-[#3584e4]">
                                <span className="absolute -bottom-[3px] -right-[3px] h-1 w-1 bg-[#3584e4]" />
                            </div>
                            <div className="absolute left-[393px] top-[71px]">
                                <PieChart />
                            </div>
                            <div className="absolute left-[393px] top-[307px]">
                                <BarChart />
                            </div>
                        </div>
                        <div className="w-[9px] shrink-0 border-t-2 border-[#444] bg-[#cfcfcd] px-[2px] pt-[3px]">
                            <div className="h-[251px] rounded-full bg-[#7f8080]" />
                        </div>
                    </div>
                    <div className="mr-[9px] flex h-[10px] shrink-0 items-center justify-between bg-[#cdcdcb] pl-[2px] pr-px">
                        <div className="h-[6px] w-[542px] rounded-full bg-[#7f8080]" />
                        <div className="h-[7px] w-[2px] bg-[#555]" />
                    </div>
                    <SheetTabs />
                </main>
                <aside className="relative flex w-[39px] shrink-0 flex-col items-center gap-[13px] border-l border-[#cfcdcb] pt-[6px]">
                    {['menu', 'props', 'styles', 'gallery', 'nav', 'fx'].map((name) => (
                        <button key={name} aria-label={name}><Icon name={name} /></button>
                    ))}
                    <button aria-label="Collapse sidebar" className="absolute left-0 top-[268px] flex h-[50px] w-1 items-center justify-center bg-[#929594]">
                        <span className="h-[3px] w-[3px] rounded-full bg-white" />
                    </button>
                </aside>
            </div>
            <StatusBar />
        </div>
    )
}

export default App
